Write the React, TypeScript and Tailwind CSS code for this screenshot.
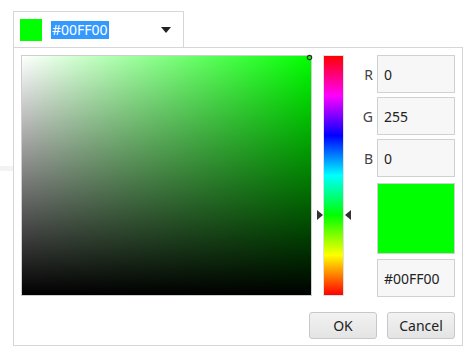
import React from 'react';

const font = { fontFamily: '"Noto Sans", "Open Sans", sans-serif' };

const Field: React.FC<{ label?: string; value: string }> = ({ label, value }) => (
  <div className="flex items-center">
    <span className="w-[17px] pr-[4px] text-right text-[14px] text-[#444]">{label}</span>
    <div className="flex h-[38px] w-[78px] items-center border border-[#d0d0d0] bg-[#f7f7f7] px-[6px] text-[14px] text-[#222]">
      {value}
    </div>
  </div>
);

const App: React.FC = () => {
  return (
    <div className="relative h-[357px] w-[473px] bg-white" style={font}>
      {/* faint strip behind the popup */}
      <div className="absolute left-0 top-[166px] h-[5px] w-[13px] bg-[#f3f3f3]" />

      <div className="absolute left-[13px] top-[11px]">
        {/* dropdown */}
        <div className="flex h-[36px] w-[171px] items-center border border-b-0 border-[#d6d6d6] bg-white pl-[6px] pr-[12px]">
          <div className="h-[22px] w-[22px] bg-[#00ff00]" />
          <span className="ml-[9px] bg-[#3399ff] px-[1px] text-[14px] leading-[18px] text-white">#00FF00</span>
          <svg className="ml-auto" width="10" height="6" viewBox="0 0 10 6">
            <path d="M0 0 L10 0 L5 6 Z" fill="#222" />
          </svg>
        </div>

        {/* popup */}
        <div className="w-[450px] border border-[#d6d6d6] bg-white px-[7px] pb-[6px] pt-[7px]">
          <div className="flex">
            <div
              className="relative h-[241px] w-[291px] border border-[#cfcfcf]"
              style={{
                background:
                  'linear-gradient(to top, #000, rgba(0,0,0,0)), linear-gradient(to right, #fff, #00ff00)',
              }}
            >
              <svg className="absolute -right-[2px] -top-[2px]" width="7" height="7" viewBox="0 0 7 7">
                <circle cx="3.5" cy="3.5" r="2.2" fill="none" stroke="#2a2a2a" strokeWidth="1.2" />
              </svg>
            </div>
            <div className="relative ml-[5px] h-[241px] w-[34px]">
              <div
                className="ml-[6px] h-full w-[21px] border border-[#e0e0e0]"
                style={{
                  background:
                    'linear-gradient(to bottom, #ff0000, #ff00ff, #0000ff, #00ffff, #00ff00, #ffff00, #ff0000)',
                }}
              />
              <svg className="absolute left-0 top-[155px]" width="6" height="10" viewBox="0 0 6 10">
                <path d="M0 0 L6 5 L0 10 Z" fill="#333" />
              </svg>
              <svg className="absolute right-0 top-[155px]" width="6" height="10" viewBox="0 0 6 10">
                <path d="M6 0 L0 5 L6 10 Z" fill="#333" />
              </svg>
            </div>
            <div className="ml-[9px] flex flex-col">
              <div className="flex flex-col gap-[4px]">
                <Field label="R" value="0" />
                <Field label="G" value="255" />
                <Field label="B" value="0" />
              </div>
              <div className="ml-[17px] mt-[6px] h-[71px] w-[78px] border border-[#d0d0d0] bg-[#00ff00]" />
              <div className="mt-[5px]">
                <Field value="#00FF00" />
              </div>
            </div>
          </div>
          <div className="mt-[15px] flex justify-end gap-[10px]">
            <button className="h-[27px] w-[68px] rounded-[3px] border border-[#c8c8c8] bg-gradient-to-b from-[#f2f2f2] to-[#e4e4e4] text-[14px] text-[#222]">
              OK
            </button>
            <button className="h-[27px] w-[68px] rounded-[3px] border border-[#c8c8c8] bg-gradient-to-b from-[#f2f2f2] to-[#e4e4e4] text-[14px] text-[#222]">
              Cancel
            </button>
          </div>
        </div>
      </div>
    </div>
  );
};

export default App;
